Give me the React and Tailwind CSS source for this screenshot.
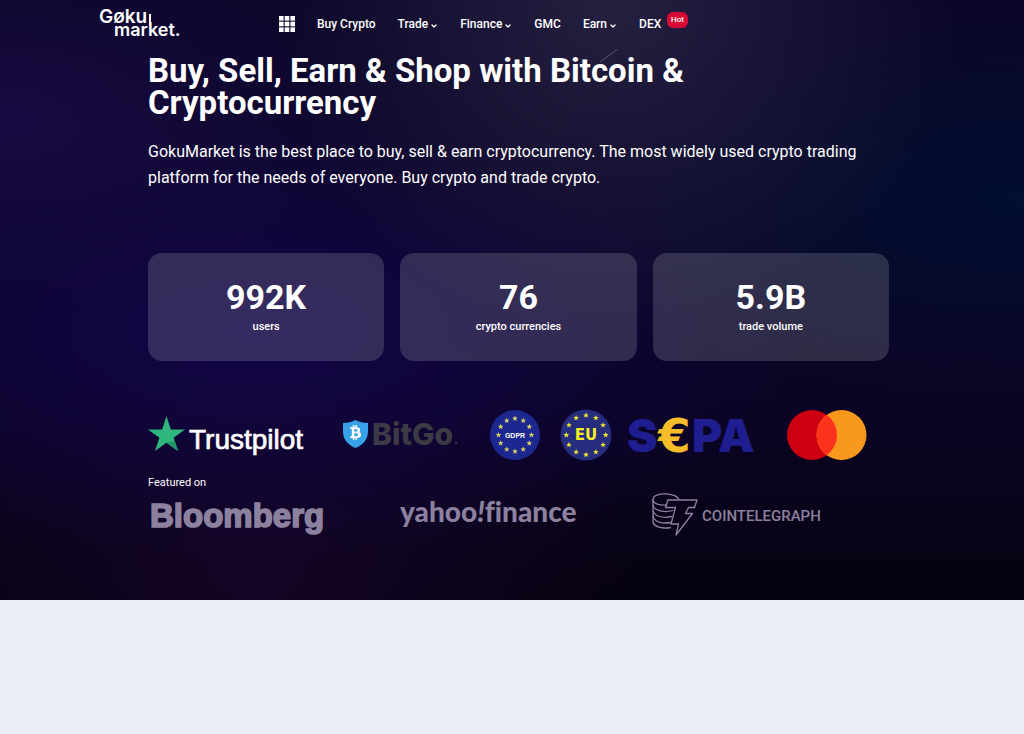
import { ChevronDown } from 'lucide-react';
import { FaBtc } from 'react-icons/fa';

const navItems = [
  { label: 'Buy Crypto' },
  { label: 'Trade', menu: true },
  { label: 'Finance', menu: true },
  { label: 'GMC' },
  { label: 'Earn', menu: true },
  { label: 'DEX', badge: 'Hot' },
];

const stats = [
  { value: '992K', label: 'users' },
  { value: '76', label: 'crypto currencies' },
  { value: '5.9B', label: 'trade volume' },
];

const STAR = 'M0 -3 L0.8 -0.9 L2.9 -0.9 L1.2 0.4 L1.8 2.4 L0 1.2 L-1.8 2.4 L-1.2 0.4 L-2.9 -0.9 L-0.8 -0.9 Z';

function StarRing({ cx, cy, radius, fill }) {
  return Array.from({ length: 12 }, (_, i) => {
    const angle = (i * Math.PI) / 6;
    const x = cx + radius * Math.sin(angle);
    const y = cy - radius * Math.cos(angle);
    return <path key={i} d={STAR} fill={fill} transform={`translate(${x} ${y})`} />;
  });
}

function GokuLogo() {
  return (
    <svg width="82" height="32" viewBox="0 0 82 32" role="img" aria-label="Goku Market" fill="#fff" className="overflow-visible font-['Inter'] font-semibold">
      <text x="-1" y="15" fontSize="19">Gøku</text>
      {/* the u runs down into the k below */}
      <path d="M50 6v12" stroke="#fff" strokeWidth="2" />
      <text x="14" y="28" fontSize="18">market.</text>
    </svg>
  );
}

function GridIcon() {
  return (
    <svg width="16" height="16" viewBox="0 0 16 16" fill="#fff">
      {[0, 1, 2].map((row) =>
        [0, 1, 2].map((col) => (
          <rect key={`${row}-${col}`} x={col * 5.7} y={row * 5.7} width="4.6" height="4.6" />
        ))
      )}
    </svg>
  );
}

function Trustpilot() {
  return (
    <svg width="159" height="52" viewBox="0 0 159 52" role="img" aria-label="Trustpilot">
      <path d="M18.5 7 L22.8 20.5 H37 L25.6 28.8 L30 42 L18.5 33.8 L7 42 L11.4 28.8 L0 20.5 H14.2 Z" fill="#2fb67c" />
      <path d="M26.6 31.8 L18.5 33.8 L30 42 Z" fill="#23966a" />
      <text x="41" y="40" fontSize="28" fill="#fff" stroke="#fff" strokeWidth="0.7" className="font-['Liberation_Sans']">Trustpilot</text>
    </svg>
  );
}

function BitGo() {
  return (
    <svg width="115" height="52" viewBox="0 0 115 52" role="img" aria-label="BitGo">
      <path d="M0 14 Q7 14 12.5 11 Q18 14 25 14 V22 Q25 34 12.5 39 Q0 34 0 22 Z" fill="#37a2ea" />
      <FaBtc x="5" y="16" size={15} color="#fff" />
      <text x="29" y="36" fontSize="30" fill="#3c3a44" className="font-['Inter'] font-extrabold">BitGo</text>
      <circle cx="113" cy="34" r="1.2" fill="#3c3a44" />
    </svg>
  );
}

function Gdpr() {
  return (
    <svg width="50" height="52" viewBox="0 0 50 52" role="img" aria-label="GDPR">
      <circle cx="25" cy="26" r="25" fill="#1c2790" />
      <StarRing cx={25} cy={26} radius={16.5} fill="#d6cf6a" />
      <text x="25" y="29" fontSize="7" fill="#fff" textAnchor="middle" className="font-['Liberation_Sans'] font-bold">GDPR</text>
    </svg>
  );
}

function Eu() {
  return (
    <svg width="52" height="52" viewBox="0 0 52 52" role="img" aria-label="EU">
      <circle cx="26" cy="26" r="25.5" fill="#272d7e" />
      <StarRing cx={26} cy={26} radius={19.7} fill="#f2ea2e" />
      <text x="26" y="31" fontSize="15" fill="#f7ef1f" textAnchor="middle" className="font-['DejaVu_Sans'] font-bold">EU</text>
    </svg>
  );
}

function Sepa() {
  return (
    <svg width="127" height="52" viewBox="0 0 127 52" role="img" aria-label="SEPA" className="overflow-visible font-['Inter'] font-black">
      <g fill="#1e1e90" fontSize="46">
        <text x="-1" y="43">S</text>
        <text x="64" y="43">PA</text>
      </g>
      <text x="30" y="43" fontSize="47" fill="#f6bd2b" className="font-['DejaVu_Sans'] font-bold">€</text>
    </svg>
  );
}

function Mastercard() {
  return (
    <svg width="80" height="52" viewBox="0 0 80 52" role="img" aria-label="Mastercard">
      <circle cx="25" cy="26" r="25" fill="#cc0010" />
      <circle cx="54.5" cy="26" r="25" fill="#f8981d" />
      <path d="M39.75 5.8 A25 25 0 0 1 39.75 46.2 A25 25 0 0 1 39.75 5.8 Z" fill="#fc321c" />
    </svg>
  );
}

function Bloomberg() {
  return (
    <svg width="180" height="43" viewBox="0 0 180 43" role="img" aria-label="Bloomberg">
      <text x="2" y="34" fontSize="33" fill="#8c819f" stroke="#8c819f" strokeWidth="1.6" className="font-['Liberation_Sans'] font-bold">Bloomberg</text>
    </svg>
  );
}

function YahooFinance() {
  return (
    <svg width="180" height="43" viewBox="0 0 180 43" role="img" aria-label="Yahoo Finance" fill="#8c819f" className="font-['Lato'] font-black [font-variant-ligatures:none]">
      <text x="0" y="29" fontSize="28">yahoo<tspan fontStyle="italic">!</tspan>finance</text>
    </svg>
  );
}

function Cointelegraph() {
  return (
    <svg width="180" height="43" viewBox="0 0 180 43" role="img" aria-label="Cointelegraph" className="overflow-visible">
      <g fill="none" stroke="#8c819f" strokeWidth="1.3" strokeLinejoin="round">
        {/* coin stack */}
        <path d="M26 6.500 C24 -0.500 0 -1.500 0 6.500 C0 11 7 12.500 14 12" />
        <path d="M0 6.500 V29 C1 34 9 36 18 34.500" />
        <path d="M0 12 C1 18 12 20 20 17.500 M0 17.500 C1 23.500 10 25.500 19 23.500 M0 23 C1 29 9 31 18 29.500" />
        {/* T with a bolt for its stem */}
        <path d="M15 7 H44 L41.500 14.500 H35.500 L32.500 20.500 H39.500 L23 42 L25.500 31 H18 L22.500 14.500 H12.500 Z" />
      </g>
      <text x="49" y="28" fontSize="15" fill="#8c819f" className="font-['Roboto'] font-medium">COINTELEGRAPH</text>
    </svg>
  );
}

export default function App() {
  return (
    <div className="min-h-screen bg-[#ebeef7] font-['Roboto',sans-serif] text-white">
      <div className="relative bg-[#0b0424] bg-[radial-gradient(ellipse_at_60%_0%,#251f40_0%,transparent_40%),radial-gradient(ellipse_at_100%_33%,#020f30_0%,transparent_35%),radial-gradient(ellipse_at_0%_20%,#180a42_0%,transparent_28%),radial-gradient(ellipse_at_25%_55%,#120548_0%,transparent_50%),radial-gradient(ellipse_at_25%_95%,#140526_0%,transparent_35%),linear-gradient(to_bottom,#0b0628_0%,#0b0424_70%,#06020f_100%)] pb-16">
        <svg className="absolute top-12 left-[599px]" width="20" height="15" viewBox="0 0 20 15">
          <path d="M1 14 L19 1" stroke="#5b5574" strokeWidth="1" />
        </svg>

        <header className="flex h-12 items-center pl-[100px]">
          <a href="#home">
            <GokuLogo />
          </a>
          <nav className="ml-[97px] flex items-center gap-[22px] text-xs font-medium">
            <button type="button" aria-label="All products">
              <GridIcon />
            </button>
            {navItems.map((item) => (
              <a key={item.label} href="#nav" className="relative flex items-center gap-0.5 whitespace-nowrap">
                {item.label}
                {item.menu && <ChevronDown className="mt-1 size-2" strokeWidth={4} />}
                {item.badge && (
                  <span className="absolute -top-1 left-7 rounded-md bg-[#d80a35] px-1 text-[8px] leading-4">{item.badge}</span>
                )}
              </a>
            ))}
          </nav>
        </header>

        <main className="pt-[7px] pr-[135px] pl-[148px]">
          <h1 className="max-w-[600px] text-[33px] leading-8 font-bold">
            Buy, Sell, Earn &amp; Shop with Bitcoin &amp; Cryptocurrency
          </h1>
          <p className="mt-5 text-base leading-[26px]">
            GokuMarket is the best place to buy, sell &amp; earn cryptocurrency. The most widely used crypto trading
            platform for the needs of everyone. Buy crypto and trade crypto.
          </p>

          <div className="mt-[62px] grid grid-cols-3 gap-4">
            {stats.map((stat) => (
              <div key={stat.label} className="rounded-[14px] bg-[#a6a6b4]/24 pt-[26px] pb-[26px] text-center">
                <div className="text-[34px] leading-9 font-bold">{stat.value}</div>
                <div className="mt-1 text-[11px] leading-4 font-medium">{stat.label}</div>
              </div>
            ))}
          </div>

          <div className="mt-12 flex items-center">
            <Trustpilot />
            <div className="ml-9">
              <BitGo />
            </div>
            <div className="ml-8 flex gap-5">
              <Gdpr />
              <Eu />
            </div>
            <div className="ml-4 flex gap-8">
              <Sepa />
              <Mastercard />
            </div>
          </div>

          <h2 className="mt-3 text-[11px] leading-5">Featured on</h2>
          <div className="grid grid-cols-3 gap-4">
            <Bloomberg />
            <YahooFinance />
            <Cointelegraph />
          </div>
        </main>
      </div>
    </div>
  );
}
